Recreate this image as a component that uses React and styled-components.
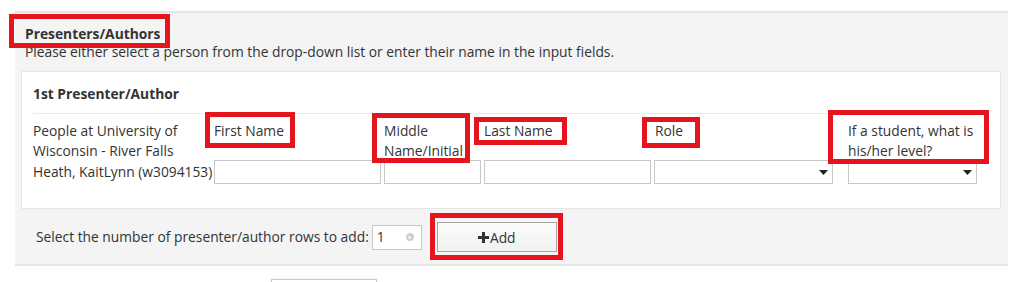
import React from 'react';
import styled, { createGlobalStyle } from 'styled-components';

const Global = createGlobalStyle`
  html, body { margin: 0; padding: 0; background: #fff; }
  body {
    font-family: "Open Sans", "Liberation Sans", sans-serif;
    font-size: 13.8px;
    color: #333;
  }
  *, *::before, *::after { box-sizing: border-box; }
`;

const Page = styled.div`
  width: 1026px;
  padding: 11px 18px 0 15px;
`;

const Panel = styled.section`
  background: #f4f4f4;
  border-top: 2px solid #e4e4e4;
  border-bottom: 2px solid #e6e6e6;
  padding: 10px 7px 0 6px;
`;

const Heading = styled.h2`
  margin: 0;
  padding-left: 4px;
  padding-top: 1px;
  font-size: 13.8px;
  font-weight: 700;
  line-height: 19px;
  color: #333;
`;

const Description = styled.p`
  margin: 0;
  padding-left: 4px;
  font-size: 13.8px;
  line-height: 18px;
  color: #333;
`;

const Card = styled.div`
  margin-top: 10px;
  background: #fff;
  border: 1px solid #e6e6e6;
  padding: 0 11px 24px;
`;

const CardTitle = styled.div`
  font-weight: 700;
  line-height: 20px;
  padding: 12px 0 9px;
  border-bottom: 1px solid #ebebeb;
`;

const Grid = styled.div`
  margin-top: 7px;
  display: grid;
  grid-template-columns: 181px 170px 100px 170px 194px 130px;
  grid-template-rows: 39px 24px;
`;

const Label = styled.div`
  line-height: 20px;
  padding-left: ${p => p.$pl || 0}px;
  white-space: ${p => (p.$nowrap ? 'nowrap' : 'normal')};
`;

const PersonCell = styled.div`
  line-height: 20px;
  align-self: center;
  white-space: nowrap;
`;

const TextInput = styled.div`
  width: ${p => p.$w}px;
  height: 24px;
  background: #fff;
  border: 1px solid #c8c8c8;
`;

const SelectBox = styled.div`
  width: ${p => p.$w}px;
  height: 24px;
  background: #fff;
  border: 1px solid #c8c8c8;
  display: flex;
  align-items: center;
  justify-content: flex-end;
  padding-right: 4px;
`;

const Footer = styled.div`
  display: flex;
  align-items: center;
  padding: 13px 0 12px 15px;
`;

const FooterLabel = styled.span`
  line-height: 20px;
  margin-right: 3px;
`;

const NumberInput = styled.div`
  width: 50px;
  height: 25px;
  background: #fff;
  border: 1px solid #c8c8c8;
  display: flex;
  align-items: center;
  justify-content: space-between;
  padding: 0 7px 0 4px;
  line-height: 20px;
`;

const ClearDot = styled.span`
  width: 8px;
  height: 8px;
  border-radius: 50%;
  background: #cfcfcf;
  display: inline-flex;
  align-items: center;
  justify-content: center;
  &::after {
    content: "";
    width: 3px;
    height: 3px;
    border-radius: 50%;
    background: #f2f2f2;
  }
`;

const AddButton = styled.button`
  width: 120px;
  height: 30px;
  background: linear-gradient(#fbfbfb, #f1f1f1);
  border: 1px solid #a6a6a6;
  border-radius: 0;
  font-family: "Open Sans", "Liberation Sans", sans-serif;
  font-size: 13.8px;
  color: #333;
  display: flex;
  align-items: center;
  justify-content: center;
  padding: 0;
`;

const Below = styled.div`
  margin-top: 13px;
  padding-left: 256px;
`;

const StubBox = styled.div`
  width: 106px;
  height: 28px;
  border: 1px solid #c8c8c8;
  box-shadow: 0 0 3px rgba(0, 0, 0, 0.08);
  background: #fff;
`;

const Marked = styled.span`
  position: relative;
  display: ${p => (p.$block ? 'block' : 'inline-block')};
  margin-left: ${p => p.$ml || 0}px;
  &::after {
    content: "";
    position: absolute;
    left: ${p => p.$x}px;
    top: ${p => p.$y}px;
    width: ${p => p.$w}px;
    height: ${p => p.$h}px;
    border: 5px solid #e3151d;
    pointer-events: none;
  }
`;

const Caret = () => (
  <svg width="9" height="5" viewBox="0 0 9 5">
    <path d="M0 0 H9 L4.5 5 Z" fill="#222" />
  </svg>
);

const Plus = () => (
  <svg width="11" height="11" viewBox="0 0 11 11" style={{ marginRight: 1 }}>
    <path d="M4 0 H7 V4 H11 V7 H7 V11 H4 V7 H0 V4 H4 Z" fill="#333" />
  </svg>
);

export default function App() {
  return (
    <Page>
      <Global />
      <Panel>
        <Heading>
          <Marked $x={-16} $y={-10} $w={161} $h={34}>Presenters/Authors</Marked>
        </Heading>
        <Description>
          Please either select a person from the drop-down list or enter their name in the input fields.
        </Description>
        <Card>
          <CardTitle>1st Presenter/Author</CardTitle>
          <Grid>
            <Label>People at University of<br />Wisconsin - River Falls</Label>
            <Label>
              <Marked $block $x={-9} $y={-9} $w={90} $h={36}>First Name</Marked>
            </Label>
            <Label $nowrap>
              <Marked $block $x={-12} $y={-8} $w={98} $h={50}>Middle<br />Name/Initial</Marked>
            </Label>
            <Label>
              <Marked $block $x={-10} $y={-4} $w={93} $h={28}>Last Name</Marked>
            </Label>
            <Label $pl={1}>
              <Marked $block $x={-13} $y={-4} $w={58} $h={31}>Role</Marked>
            </Label>
            <Label $nowrap>
              <Marked $block $x={-20} $y={-11} $w={161} $h={54}>If a student, what is<br />his/her level?</Marked>
            </Label>

            <PersonCell>Heath, KaitLynn (w3094153)</PersonCell>
            <TextInput $w={167} />
            <TextInput $w={97} />
            <TextInput $w={167} />
            <SelectBox $w={179}><Caret /></SelectBox>
            <SelectBox $w={129}><Caret /></SelectBox>
          </Grid>
        </Card>
        <Footer>
          <FooterLabel>Select the number of presenter/author rows to add:</FooterLabel>
          <NumberInput>
            <span>1</span>
            <ClearDot />
          </NumberInput>
          <Marked $ml={15} $x={-7} $y={-9} $w={133} $h={47}>
            <AddButton type="button"><Plus />Add</AddButton>
          </Marked>
        </Footer>
      </Panel>
      <Below>
        <StubBox />
      </Below>
    </Page>
  );
}
